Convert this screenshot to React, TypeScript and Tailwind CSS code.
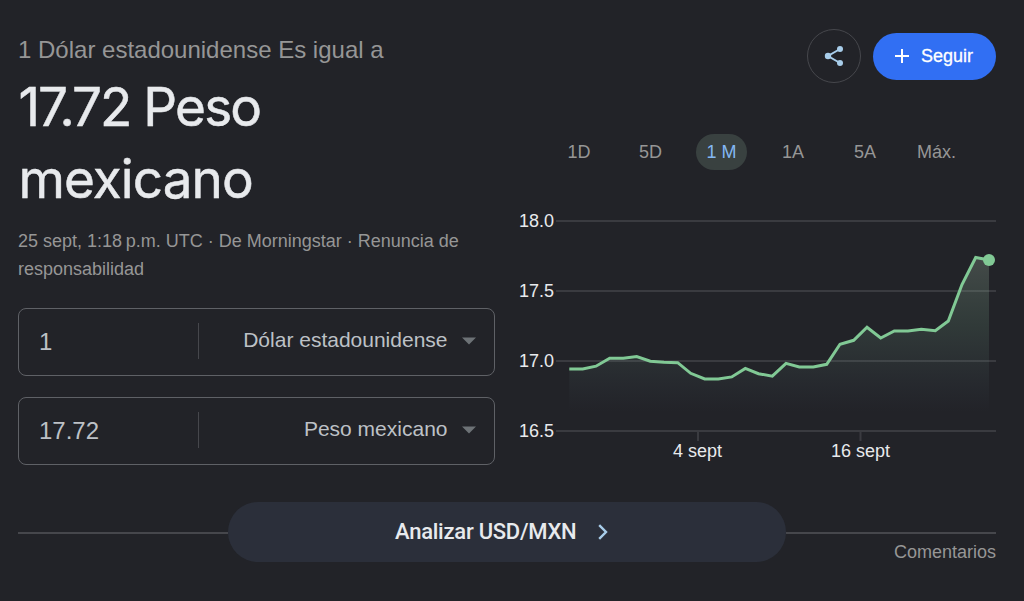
import React from "react";

const ranges = [
  { label: "1D", width: "w-[52px]" },
  { label: "5D", width: "w-[52px]" },
  { label: "1 M", width: "w-[51px]", active: true },
  { label: "1A", width: "w-[53px]" },
  { label: "5A", width: "w-[52px]" },
  { label: "Máx.", width: "w-[52px]" },
];

const points: [number, number][] = [
  [569.3, 369], [582.7, 369], [596, 366.2], [609.7, 358.2], [623.3, 358.2], [636.7, 356.6],
  [650.3, 361.2], [664, 362.3], [677.7, 362.7], [690.7, 373.3], [704.7, 379], [718.3, 379],
  [731.7, 376.9], [745.3, 368.4], [758.5, 373.7], [772.3, 376.2], [786, 363.3], [799.3, 367],
  [813.3, 367], [826.7, 364.3], [840, 344.2], [853.7, 340.3], [867, 327.3], [880.7, 338],
  [894.3, 331], [908, 331], [921.3, 329.2], [935.3, 330.7], [948.3, 321], [962, 284.5],
  [975.7, 257.5], [989, 260],
];

const line = points.map(([x, y]) => `${x},${y}`).join(" ");

function Chart() {
  return (
    <svg width="486" height="270" viewBox="514 200 486 270" className="block" fontFamily="'Liberation Sans', Arial, sans-serif" fontSize="18">
      <defs>
        <linearGradient id="area" gradientUnits="userSpaceOnUse" x1="0" y1="257" x2="0" y2="412">
          <stop offset="0" stopColor="#a2b5a2" stopOpacity="0.27" />
          <stop offset="0.45" stopColor="#81b995" stopOpacity="0.15" />
          <stop offset="0.7" stopColor="#81b0a0" stopOpacity="0.08" />
          <stop offset="1" stopColor="#6f90b0" stopOpacity="0" />
        </linearGradient>
      </defs>
      {["18.0", "17.5", "17.0", "16.5"].map((label, i) => (
        <g key={label}>
          <rect x="556" y={220 + i * 70} width="440" height="2" fill="#3a3b40" />
          <text x="519" y={227 + i * 70} fill="#e8eaed" textLength="35">{label}</text>
        </g>
      ))}
      <rect x="697" y="432" width="2" height="9" fill="#3a3b40" />
      <rect x="859.5" y="432" width="2" height="9" fill="#3a3b40" />
      <text x="697.5" y="457" textAnchor="middle" fill="#e8eaed">4 sept</text>
      <text x="860.5" y="457" textAnchor="middle" fill="#e8eaed">16 sept</text>
      <polygon points={`569.3,431 ${line} 989,431`} fill="url(#area)" />
      <polyline points={line} fill="none" stroke="#81c995" strokeWidth="3" />
      <circle cx="989" cy="260" r="6" fill="#81c995" />
    </svg>
  );
}

function CurrencyField({ amount, currency }: { amount: string; currency: string }) {
  return (
    <div className="flex h-[68px] w-[477px] items-center rounded-lg border border-[#5f6166] text-[#bdc1c6]">
      <div className="w-[179px] pl-5 text-[24px] leading-[66px]">{amount}</div>
      <div className="mb-[3px] h-9 w-px bg-[#46474c]" />
      <div className="mb-1 flex flex-1 items-center justify-end pr-[18px]">
        <span className="text-[21px] leading-6">{currency}</span>
        <svg width="14" height="8" viewBox="0 0 14 8" className="ml-[14.5px] mt-[2px]">
          <path d="M0 0.5h14L7 7.5z" fill="#6d7276" />
        </svg>
      </div>
    </div>
  );
}

export default function App() {
  return (
    <div className="h-[601px] w-[1024px] overflow-hidden bg-[#222328] font-['Liberation_Sans',Arial,sans-serif] text-[#9aa0a6]">
      <div className="flex h-[502px]">
        <div className="w-[514px] pl-[18px] pt-[34px]">
          <div className="h-8 whitespace-nowrap text-[24px] leading-8 text-[#969696]">1 Dólar estadounidense Es igual a</div>
          <h1 className="mt-[5px] h-[145px] w-[300px] pl-[0.5px] font-[Inter,sans-serif] text-[53px] leading-[72px] text-[#e8eaed] [-webkit-text-stroke:0.5px_#e8eaed]">
            <span className="flex gap-[13px]">
              <span className="tracking-[-2px]">17.72</span>
              <span className="tracking-[-1.8px]">Peso</span>
            </span>
            <span className="block tracking-[-0.9px]">mexicano</span>
          </h1>
          <p className="mt-[11px] w-[470px] text-[18px] leading-7 text-[#969696]">
            25 sept, 1:18&#8239;p.m. UTC · De Morningstar · Renuncia de responsabilidad
          </p>
          <div className="mt-[25px] flex flex-col gap-[21px]">
            <CurrencyField amount="1" currency="Dólar estadounidense" />
            <CurrencyField amount="17.72" currency="Peso mexicano" />
          </div>
        </div>
        <div className="w-[510px]">
          <div className="flex h-[134px] items-start justify-end gap-3 pr-7 pt-[29px]">
            <button className="flex h-[54px] w-[54px] items-center justify-center rounded-full border border-[#46474c]">
              <svg width="20" height="22" viewBox="0 0 20 22" fill="#a8cdea" stroke="#a8cdea">
                <path d="M16 4L4 11l12 7" fill="none" strokeWidth="2" />
                <circle cx="16" cy="4" r="3" stroke="none" />
                <circle cx="4" cy="11" r="3.2" stroke="none" />
                <circle cx="16" cy="18" r="3" stroke="none" />
              </svg>
            </button>
            <button className="mt-1 flex h-[47px] w-[123px] items-center rounded-full bg-[#316ff3] pl-[22px] text-[18px] text-white">
              <svg width="14" height="14" viewBox="0 0 14 14" className="mr-3 -mt-[2px]">
                <path d="M7 0v14M0 7h14" stroke="white" strokeWidth="2" />
              </svg>
              <span className="[-webkit-text-stroke:0.3px_white]">Seguir</span>
            </button>
          </div>
          <div className="flex gap-[19.5px] pl-[39px] text-[18px] text-[#969696]">
            {ranges.map((r) => (
              <button
                key={r.label}
                className={`flex h-9 shrink-0 items-center justify-center whitespace-nowrap rounded-full ${r.width} ${r.active ? "bg-[#394140] text-[#83b7f3]" : ""}`}
              >
                {r.label}
              </button>
            ))}
          </div>
          <div className="pt-[30px]">
            <Chart />
          </div>
        </div>
      </div>
      <div className="flex h-[60px] items-center pl-[18px] pr-7">
        <div className="mt-[2px] h-[2px] w-[210px] bg-[#46474c]" />
        <button className="flex h-[60px] w-[558px] items-center rounded-full bg-[#2b2f3a] pl-[167px] text-[#e8eaed]">
          <span className="whitespace-nowrap font-[Roboto,sans-serif] text-[22px] font-medium leading-7 tracking-[-0.25px]">Analizar USD/MXN</span>
          <svg width="10" height="16" viewBox="0 0 10 16" className="ml-[22px]">
            <path d="M1.2 1.2L8 8l-6.8 6.8" fill="none" stroke="#a8cdea" strokeWidth="2.4" />
          </svg>
        </button>
        <div className="mt-[2px] h-[2px] w-[210px] bg-[#46474c]" />
      </div>
      <div className="-mt-5 pr-7 text-right text-[18px] leading-5 text-[#969696]">Comentarios</div>
    </div>
  );
}
